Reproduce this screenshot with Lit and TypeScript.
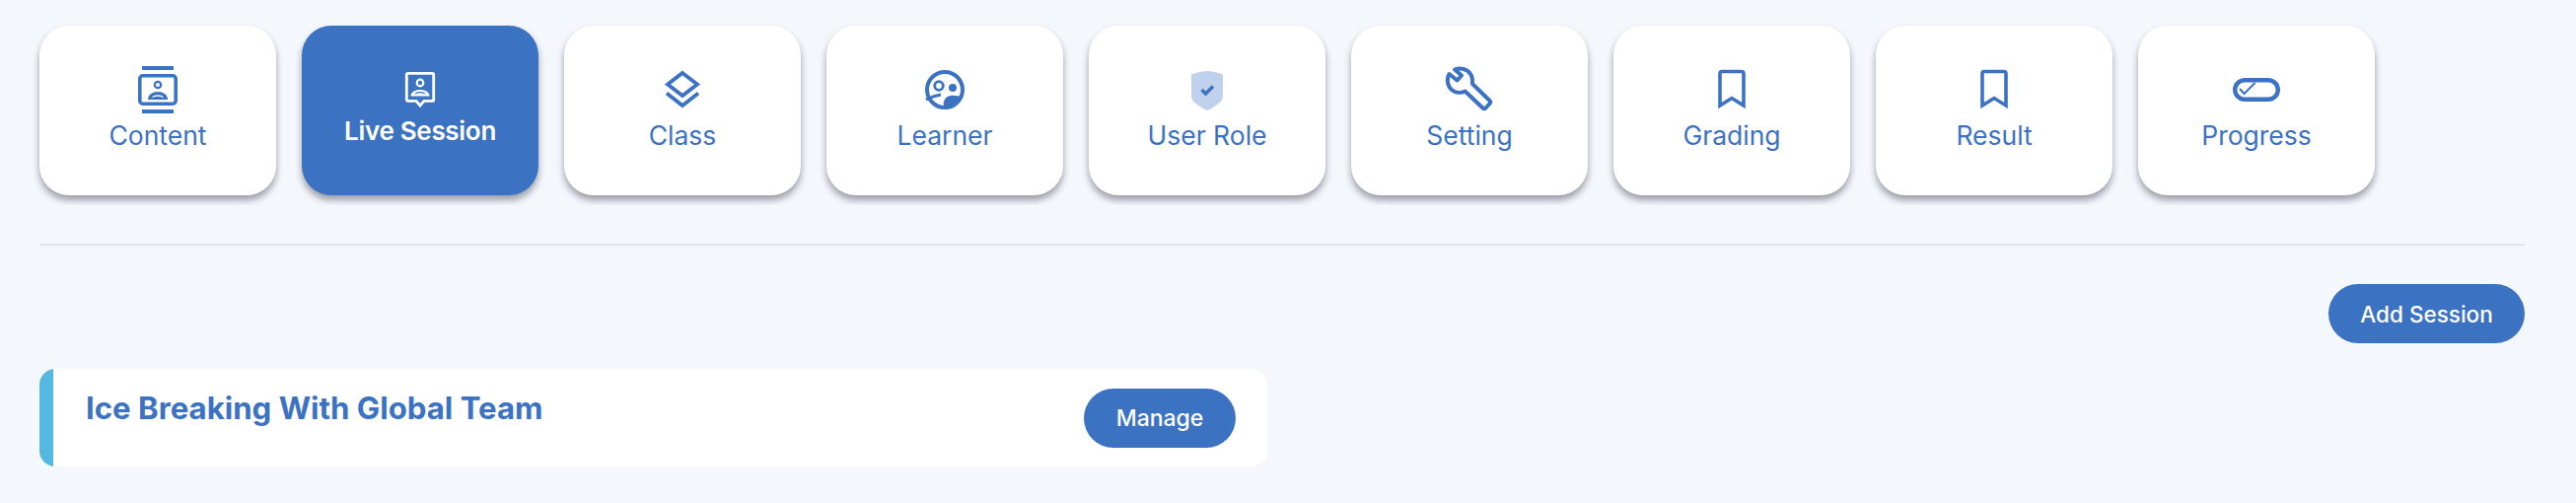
import { LitElement, html, css, svg } from "lit";
import { customElement } from "lit/decorators.js";

const icons: Record<string, unknown> = {
  content: svg`<path d="M12 2h32v4H12z" fill="currentColor"/><path d="M12 46h32v4H12z" fill="currentColor"/>
    <rect x="9.8" y="11.8" width="36.4" height="28.4" rx="3" fill="none" stroke="currentColor" stroke-width="3.6"/>
    <circle cx="28" cy="21" r="3.2" fill="none" stroke="currentColor" stroke-width="2.2"/>
    <path d="M18 36c0-5 4.5-8 10-8s10 3 10 8z" fill="currentColor"/><path d="M22.5 33.5c3-2 8-2 11 0" fill="none" stroke="#fff" stroke-width="1.3"/>`,
  live: svg`<path d="M15.500 9.400h25a1.200 1.200 0 0 1 1.200 1.200v25.600a1.200 1.200 0 0 1-1.200 1.200h-8.500L28 42l-4-4.600h-8.500a1.200 1.200 0 0 1-1.200-1.200V10.600a1.200 1.200 0 0 1 1.200-1.200z" fill="none" stroke="currentColor" stroke-width="2.800"/>
    <circle cx="28" cy="19" r="3.300" fill="none" stroke="currentColor" stroke-width="2.200"/>
    <path d="M18.500 32.500c0-4 4-6.500 9.500-6.500s9.500 2.500 9.500 6.500z" fill="currentColor"/><path d="M23 30c3-1.600 7-1.600 10 0" fill="none" stroke="#3c72c2" stroke-width="1.300"/>`,
  layers: svg`<path d="M28 9 43 20.500 28 32 13 20.500z" fill="none" stroke="currentColor" stroke-width="3.800"/>
    <path d="M12 29.500 28 42l16-12.500" fill="none" stroke="currentColor" stroke-width="3.800"/>`,
  learner: svg`<circle cx="28" cy="26" r="18" fill="none" stroke="currentColor" stroke-width="4"/>
    <circle cx="22" cy="22" r="4.300" fill="none" stroke="currentColor" stroke-width="2.800"/>
    <circle cx="36" cy="24" r="4" fill="currentColor"/>
    <path d="M27 44c-1-7 1-11 7-12 4-.6 8 .5 11 1-1.500 6-8 12-18 11z" fill="currentColor"/>
    <path d="M9 36c4-2 8-4 15-5" fill="none" stroke="currentColor" stroke-width="2.800"/>`,
  shield: svg`<path d="M12 10.500C18 8.500 23 7 28 7s10 1.500 16 3.500V33c0 5-9 11-16 14-7-3-16-9-16-14z" fill="#bfd1ec"/>
    <path d="m22.500 26 4 4 7.500-7.500" fill="none" stroke="currentColor" stroke-width="3.400"/>`,
  wrench: svg`<path d="M13 5.500 20 11.500 15.500 16.500 7.500 10C4.500 15 5.500 22 10 26c4 3.500 9.500 3.500 13.500 1.500l18 17c1 1 2 1 3 0l4-4.500c1-1 1-2 0-3L31 20c.5-6-1.500-11-5.500-13.500C21.500 4.200 17 4 13 5.500z" fill="none" stroke="currentColor" stroke-width="4" stroke-linejoin="round"/>`,
  bookmark: svg`<path d="M16 9.500a2 2 0 0 1 2-2h20a2 2 0 0 1 2 2V42l-12-7.500L16 42z" fill="none" stroke="currentColor" stroke-width="3.600"/>`,
  progress: svg`<rect x="6.200" y="16.200" width="43.600" height="19.600" rx="9.800" fill="none" stroke="currentColor" stroke-width="4.400"/>
    <path d="m11 25 4.500 5 11-11" fill="none" stroke="currentColor" stroke-width="2"/>`,
};

const tabs = [
  ["Content", "content"], ["Live Session", "live"], ["Class", "layers"], ["Learner", "learner"],
  ["User Role", "shield"], ["Setting", "wrench"], ["Grading", "bookmark"], ["Result", "bookmark"], ["Progress", "progress"],
];

@customElement("app-root")
export class AppRoot extends LitElement {
  static styles = css`
    :host { display: block; min-height: 510px; background: #f4f7fc; padding: 0 52px 0 40px; box-sizing: border-box;
      font-family: "Inter", "Liberation Sans", sans-serif; color: #3c72c2; overflow: hidden; }
    .tabs { display: flex; gap: 26px; height: 208px; box-sizing: border-box; padding: 26px 12px 10px; margin: 0 -12px; overflow: hidden; }
    .tab { width: 240px; height: 172px; flex: none; box-sizing: border-box; background: #fff; border-radius: 30px;
      display: flex; flex-direction: column; align-items: center; padding-top: 39px;
      box-shadow: 0 5px 7px rgba(30, 35, 50, .42); }
    .tab svg { width: 56px; height: 52px; display: block; flex: none; }
    .tab span { font-size: 26.5px; line-height: 30px; margin-top: 5px; }
    .tab.on { background: #3c72c2; color: #fff; }
    .tab.on span { font-weight: 600; margin-top: 1px; font-size: 26px; letter-spacing: -.3px; }
    hr { border: 0; height: 2px; background: #e1e4ea; margin: 39px 0 39px; }
    .bar { display: flex; justify-content: flex-end; }
    .btn { height: 60px; box-sizing: border-box; border-radius: 30px; background: #3c72c2; color: #fff; display: flex; align-items: center; justify-content: center;
      font-size: 22.5px; font-weight: 500; flex: none; }
    .add { width: 199px; }
    .manage { width: 154px; font-size: 23px; margin-right: 32px; }
    .card { margin-top: 26px; width: 1245px; height: 99px; background: #fff; border-radius: 16px; overflow: hidden; display: flex; align-items: center; }
    .accent { width: 14px; height: 100%; background: #54b9e0; flex: none; }
    .body { flex: 1; align-self: stretch; padding: 22px 0 0 33px; }
    h3 { margin: 0; font-size: 31.2px; line-height: 36px; font-weight: 700; }
  `;

  render() {
    return html`
      <div class="tabs">
        ${tabs.map(([label, icon]) => html`
          <div class="tab ${label === "Live Session" ? "on" : ""}">
            <svg viewBox="0 0 56 52">${icons[icon]}</svg>
            <span>${label}</span>
          </div>`)}
      </div>
      <hr />
      <div class="bar"><div class="btn add">Add Session</div></div>
      <div class="card">
        <div class="accent"></div>
        <div class="body"><h3>Ice Breaking With Global Team</h3></div>
        <div class="btn manage">Manage</div>
      </div>
    `;
  }
}
